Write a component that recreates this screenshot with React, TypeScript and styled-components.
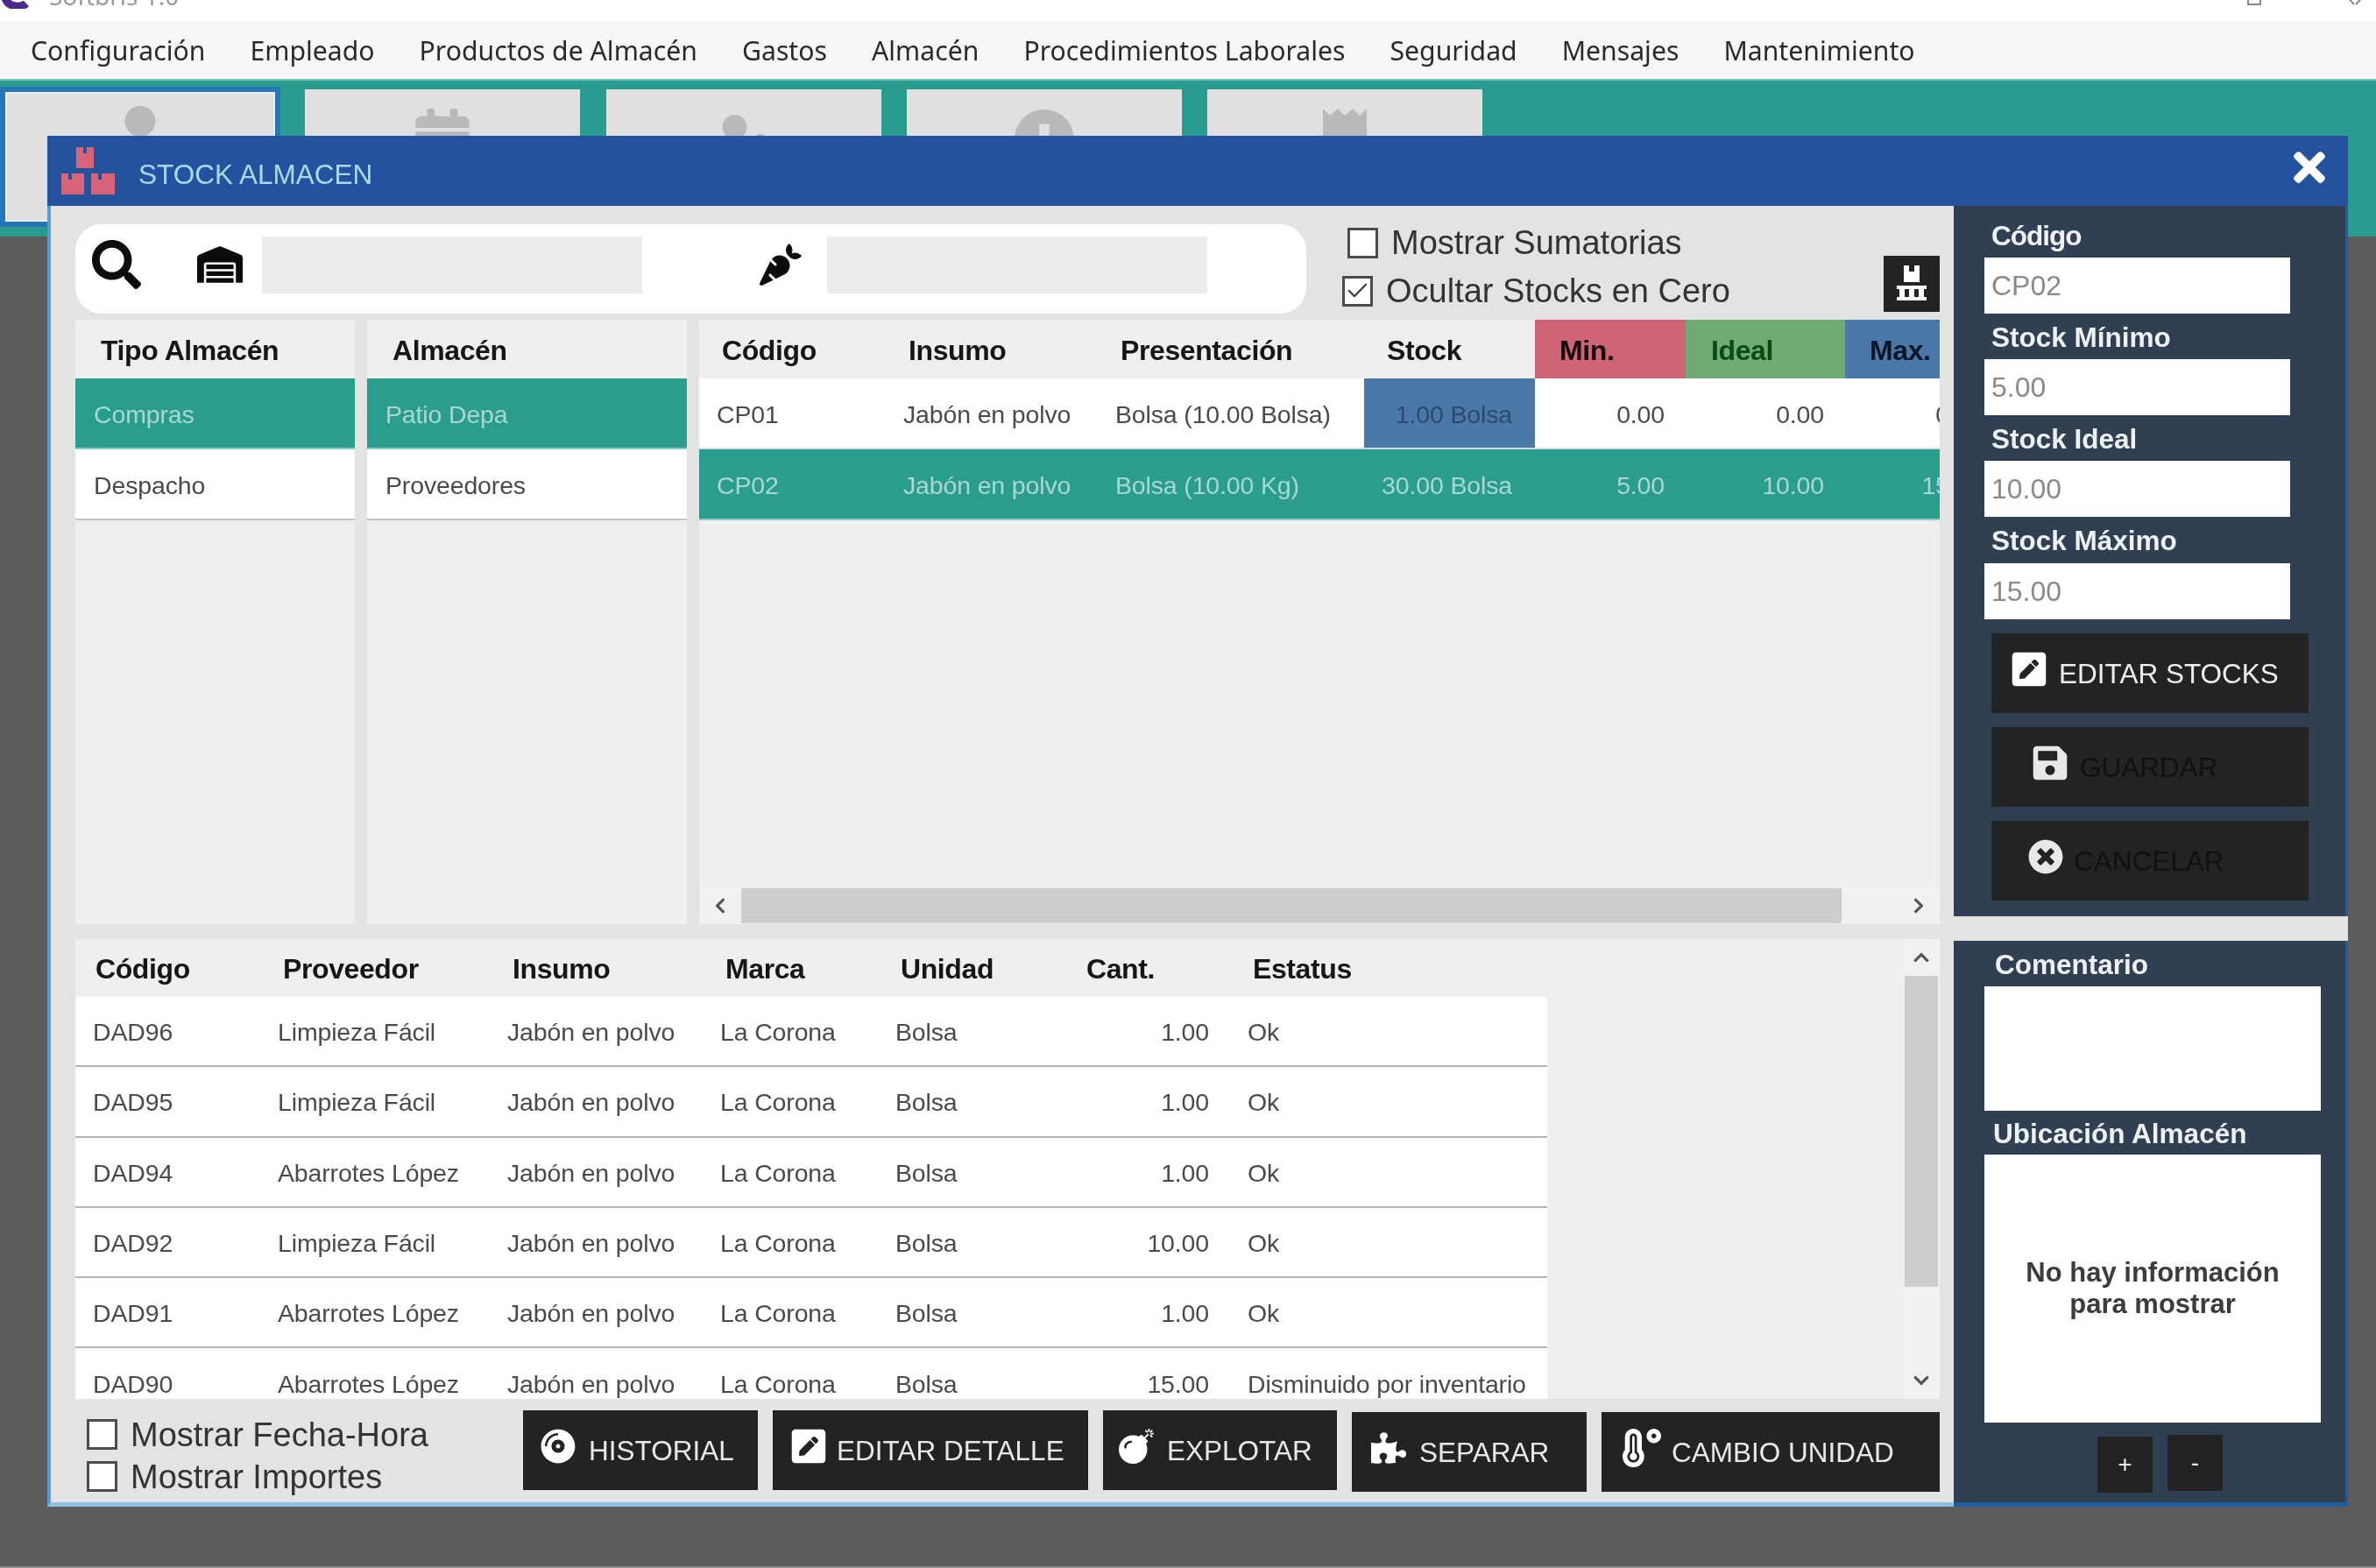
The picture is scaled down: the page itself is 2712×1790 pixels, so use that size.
import React from 'react';
import styled, { createGlobalStyle } from 'styled-components';
import {
    FaBomb,
    FaCalendarAlt,
    FaCarrot,
    FaChevronDown,
    FaChevronLeft,
    FaChevronRight,
    FaChevronUp,
    FaCompactDisc,
    FaExclamationCircle,
    FaPenSquare,
    FaPuzzlePiece,
    FaSave,
    FaSearch,
    FaTemperatureHigh,
    FaTimes,
    FaTimesCircle,
    FaUser,
    FaUserCog,
    FaWarehouse,
} from 'react-icons/fa';
import { Check } from 'lucide-react';

const GlobalStyle = createGlobalStyle`
    html, body {
        margin: 0;
        padding: 0;
        background: #5c5c5c;
    }
    * {
        box-sizing: border-box;
    }
`;

const Page = styled.div`
    position: relative;
    width: 2712px;
    height: 1790px;
    overflow: hidden;
    background: #5c5c5c;
    border-bottom: 2px solid #8a8a8a;
    font-family: 'Liberation Sans', Arial, sans-serif;
    filter: blur(0.6px);
`;

const TitleBar = styled.div`
    height: 24px;
    background: #fff;
    display: flex;
    align-items: flex-end;
    justify-content: space-between;
    overflow: hidden;
`;

const AppName = styled.div`
    display: flex;
    align-items: flex-end;
    gap: 20px;
    padding-bottom: 14px;
    font-family: 'Noto Sans', sans-serif;
    font-size: 28px;
    line-height: 30px;
    color: #9a9a9a;
`;

const WindowIcons = styled.svg`
    width: 160px;
    height: 24px;
`;

const MenuBar = styled.div`
    height: 66px;
    padding-left: 35px;
    background: #f7f7f5;
    display: flex;
    align-items: center;
    gap: 51px;
    font-family: 'Noto Sans', sans-serif;
    font-size: 30.2px;
    color: #2a2a2a;
`;

const TabStrip = styled.div`
    height: 180px;
    padding: 10px 0 0 0;
    background: #2a9c8f;
    border-top: 2px solid #7fc4bb;
    display: flex;
    align-items: flex-start;
`;

const Tab = styled.div<{ $active?: boolean; $gap?: number }>`
    width: ${(p) => (p.$active ? 320 : 314)}px;
    height: ${(p) => (p.$active ? 160 : 153)}px;
    margin-left: ${(p) => p.$gap || 0}px;
    margin-top: ${(p) => (p.$active ? -3 : 0)}px;
    background: #e0e0e0;
    color: #b9b9b9;
    border: ${(p) => (p.$active ? '6px solid #2377b8' : 'none')};
    outline: ${(p) => (p.$active ? '2px solid #f0f0f0' : 'none')};
    outline-offset: -8px;
    display: flex;
    justify-content: center;
    padding-top: ${(p) => (p.$active ? 16 : 22)}px;
    font-size: 70px;
`;

const Modal = styled.div`
    position: absolute;
    left: 54px;
    top: 155px;
    width: 2626px;
    height: 1565px;
    display: flex;
    flex-direction: column;
`;

const ModalHeader = styled.div`
    height: 80px;
    flex: none;
    background: #25529f;
    display: flex;
    align-items: center;
    padding: 0 18px 0 16px;
    color: #a9d9ea;
    font-size: 31.5px;
`;

const ModalTitle = styled.span`
    margin-left: 27px;
    margin-top: 8px;
`;

const CloseIcon = styled(FaTimes)`
    margin-left: auto;
    color: #fff;
    font-size: 52px;
    margin-top: -8px;
`;

const ModalBody = styled.div`
    flex: 1;
    display: flex;
    min-height: 0;
`;

const LeftColumn = styled.div`
    width: 2176px;
    flex: none;
    background: #e3e3e3;
    border-left: 4px solid #5b9ccb;
    border-bottom: 5px solid #8fc0e0;
    padding: 21px 16px 0 28px;
    display: flex;
    flex-direction: column;
`;

const Toolbar = styled.div`
    height: 102px;
    flex: none;
    display: flex;
`;

const SearchPanel = styled.div`
    width: 1405px;
    flex: none;
    padding: 0 0 10px 19px;
    background: #fff;
    border-radius: 30px;
    display: flex;
    align-items: center;
`;

const IconSlot = styled.div<{ $gap?: number; $size: number }>`
    flex: none;
    display: flex;
    margin-left: ${(p) => p.$gap || 0}px;
    font-size: ${(p) => p.$size}px;
    color: #0c0c0c;
`;

const SearchInput = styled.div<{ $gap: number }>`
    width: 434px;
    height: 65px;
    margin-left: ${(p) => p.$gap}px;
    background: #ececec;
    flex: none;
`;

const ToolbarChecks = styled.div`
    margin-left: 41px;
    display: flex;
    flex-direction: column;
    gap: 13px;
`;

const CheckRow = styled.div<{ $indent?: number; $height: number }>`
    height: ${(p) => p.$height}px;
    padding-left: ${(p) => p.$indent || 0}px;
    display: flex;
    align-items: center;
    gap: 15px;
    font-size: 38px;
    color: #333;
`;

const CheckLabel = styled.span`
    transform: translateY(1px);
`;

const CheckBox = styled.div`
    width: 35px;
    height: 35px;
    flex: none;
    background: #fff;
    border: 3px solid #4c4c4c;
    display: flex;
    align-items: center;
    justify-content: center;
    color: #444;
`;

const PalletButton = styled.div`
    width: 64px;
    height: 64px;
    margin: auto 0 2px auto;
    background: #222;
    display: flex;
    align-items: center;
    justify-content: center;
`;

const ListsRow = styled.div`
    height: 690px;
    flex: none;
    margin-top: 7px;
    display: grid;
    grid-template-columns: 319px 365px 1416px;
    gap: 14px;
`;

const ListPanel = styled.div`
    background: #efefef;
    display: flex;
    flex-direction: column;
    overflow: hidden;
    min-width: 0;
`;

const ListHeader = styled.div`
    height: 67px;
    flex: none;
    padding: 3px 0 0 29px;
    display: flex;
    align-items: center;
    font-size: 32px;
    font-weight: bold;
    letter-spacing: -0.4px;
    color: #161616;
`;

const ListItem = styled.div<{ $selected?: boolean }>`
    height: 81px;
    flex: none;
    padding: 3px 0 0 21px;
    display: flex;
    align-items: center;
    font-size: 28.5px;
    letter-spacing: -0.15px;
    background: ${(p) => (p.$selected ? '#2a9d8f' : '#fff')};
    color: ${(p) => (p.$selected ? '#a9d8d2' : '#4a4a4a')};
    border-bottom: 2px solid ${(p) => (p.$selected ? '#8ccac2' : '#c4c4c4')};
`;

const StockGridScroll = styled.div`
    flex: 1;
    min-height: 0;
    overflow: hidden;
`;

const stockColumns = '213px 242px 304px 195px 172px 182px 182px';

const StockHead = styled.div`
    width: 1490px;
    height: 67px;
    display: grid;
    grid-template-columns: ${stockColumns};
`;

const HeadCell = styled.div<{ $bg?: string; $fg?: string; $indent?: number }>`
    padding: 3px 0 0 ${(p) => p.$indent || 26}px;
    display: flex;
    align-items: center;
    font-size: 32px;
    font-weight: bold;
    letter-spacing: -0.4px;
    background: ${(p) => p.$bg || 'transparent'};
    color: ${(p) => p.$fg || '#161616'};
`;

const StockRow = styled.div<{ $selected?: boolean }>`
    width: 1490px;
    height: 81px;
    display: grid;
    grid-template-columns: ${stockColumns};
    background: ${(p) => (p.$selected ? '#2a9d8f' : '#fff')};
    color: ${(p) => (p.$selected ? '#a9d8d2' : '#4a4a4a')};
    border-bottom: 2px solid ${(p) => (p.$selected ? '#8ccac2' : '#d9d9d9')};
`;

const Cell = styled.div<{ $right?: boolean; $bg?: string; $fg?: string; $pad?: number }>`
    display: flex;
    align-items: center;
    justify-content: ${(p) => (p.$right ? 'flex-end' : 'flex-start')};
    padding: ${(p) => (p.$right ? `3px ${p.$pad || 24}px 0 0` : `3px 0 0 ${p.$pad || 20}px`)};
    font-size: 28.5px;
    letter-spacing: -0.15px;
    white-space: nowrap;
    overflow: hidden;
    background: ${(p) => p.$bg || 'transparent'};
    color: ${(p) => p.$fg || 'inherit'};
`;

const HScroll = styled.div`
    height: 43px;
    flex: none;
    display: flex;
    align-items: center;
    background: #f1f1f1;
    color: #555;
    font-size: 20px;
`;

const ScrollArrow = styled.div<{ $size?: number }>`
    flex: none;
    width: ${(p) => p.$size || 48}px;
    height: ${(p) => p.$size || 43}px;
    display: flex;
    align-items: center;
    justify-content: center;
`;

const HThumb = styled.div`
    width: 1256px;
    height: 40px;
    background: #cdcdcd;
`;

const HTrack = styled.div`
    flex: 1;
`;

const DetailPanel = styled.div`
    height: 525px;
    flex: none;
    margin-top: 17px;
    background: #efefef;
    display: flex;
    overflow: hidden;
`;

const DetailTable = styled.div`
    flex: 1;
    min-width: 0;
    overflow: hidden;
`;

const detailColumns = '211px 262px 243px 200px 200px 202px 362px';

const DetailHead = styled.div`
    width: 1680px;
    height: 66px;
    display: grid;
    grid-template-columns: ${detailColumns};
`;

const DetailRow = styled.div`
    width: 1680px;
    height: 80.3px;
    display: grid;
    grid-template-columns: ${detailColumns};
    background: #fff;
    color: #4a4a4a;
    border-bottom: 2px solid #b4b4b4;
`;

const VScroll = styled.div`
    width: 42px;
    flex: none;
    background: #f1f1f1;
    color: #555;
    font-size: 20px;
    display: flex;
    flex-direction: column;
    align-items: center;
`;

const VThumb = styled.div`
    width: 38px;
    height: 355px;
    background: #cdcdcd;
`;

const VTrack = styled.div`
    flex: 1;
`;

const BottomBar = styled.div`
    flex: 1;
    display: flex;
    align-items: flex-start;
`;

const BottomChecks = styled.div`
    width: 511px;
    flex: none;
    padding: 22px 0 0 13px;
    display: flex;
    flex-direction: column;
    gap: 12px;
`;

const ActionRow = styled.div`
    padding-top: 13px;
    display: flex;
    gap: 17px;
`;

const ActionButton = styled.div<{ $width: number; $drop?: boolean; $pad?: number; $gap?: number }>`
    width: ${(p) => p.$width}px;
    height: 91px;
    margin-top: ${(p) => (p.$drop ? 2 : 0)}px;
    padding-left: ${(p) => p.$pad || 20}px;
    background: #232224;
    display: flex;
    align-items: center;
    gap: ${(p) => p.$gap || 15}px;
    font-size: 31.5px;
    color: #e8e8e8;
    white-space: nowrap;
`;

const ButtonIcon = styled.span<{ $size?: number; $fg?: string }>`
    display: flex;
    font-size: ${(p) => p.$size || 40}px;
    color: ${(p) => p.$fg || '#fff'};
    transform: translateY(-5px);
`;

const ButtonText = styled.span<{ $fg?: string }>`
    color: ${(p) => p.$fg || 'inherit'};
    transform: translateY(1px);
`;

const RightColumn = styled.div`
    flex: 1;
    background: #e3e3e3;
    display: flex;
    flex-direction: column;
    gap: 28px;
`;

const SidePanel = styled.div<{ $grow?: boolean }>`
    background: #303f52;
    border-right: 3px solid #1d5da0;
    color: #eef2f4;
    display: flex;
    flex-direction: column;
    ${(p) => (p.$grow ? 'flex: 1; border-bottom: 5px solid #1d5da0;' : 'height: 811px; flex: none;')}
`;

const StockForm = styled.div`
    padding: 7px 0 0 35px;
    display: flex;
    flex-direction: column;
`;

const FieldLabel = styled.div<{ $height?: number; $indent?: number; $spacing?: number }>`
    height: ${(p) => p.$height || 52}px;
    padding: 2px 0 0 ${(p) => p.$indent || 8}px;
    display: flex;
    align-items: center;
    font-size: 31.5px;
    font-weight: bold;
    letter-spacing: ${(p) => p.$spacing || 0}px;
`;

const FieldInput = styled.div`
    width: 349px;
    height: 64px;
    padding-left: 8px;
    background: #fff;
    display: flex;
    align-items: center;
    font-size: 32px;
    color: #8a8a8a;
`;

const SideButtons = styled.div`
    margin: 16px 0 0 43px;
    display: flex;
    flex-direction: column;
    gap: 16px;
`;

const SideButton = styled.div<{ $pad: number }>`
    width: 362px;
    height: 91px;
    padding-left: ${(p) => p.$pad}px;
    background: #232224;
    display: flex;
    align-items: center;
    gap: 12px;
    font-size: 31.5px;
    color: #eee;
`;

const NotesForm = styled.div`
    padding: 0 0 0 35px;
    display: flex;
    flex-direction: column;
    flex: 1;
`;

const WhiteBox = styled.div<{ $height: number }>`
    width: 384px;
    height: ${(p) => p.$height}px;
    flex: none;
    background: #fff;
    display: flex;
    align-items: center;
    justify-content: center;
    text-align: center;
    font-size: 31px;
    line-height: 36px;
    font-weight: bold;
    color: #3c3c3c;
`;

const StepButtons = styled.div`
    margin: 14px 0 0 129px;
    display: flex;
    gap: 17px;
`;

const StepButton = styled.div<{ $drop?: boolean }>`
    width: 63px;
    height: 64px;
    margin-top: ${(p) => (p.$drop ? 2 : 0)}px;
    background: #232224;
    color: #eee;
    font-size: 28px;
    display: flex;
    align-items: center;
    justify-content: center;
`;

const BoxesLogo = () => (
    <svg width="61" height="54" viewBox="0 0 61 54">
        <path d="M17 0h8v7h4V0h8v24H17z" fill="#d9637a" />
        <path d="M0 30h8v7h4v-7h14v24H0z" fill="#d9637a" />
        <path d="M34 30h8v7h4v-7h15v24H34z" fill="#d9637a" />
    </svg>
);

const PalletIcon = () => (
    <svg width="38" height="42" viewBox="0 0 38 42">
        <path d="M10 0h6v7h6V0h6v19H10z" fill="#fff" />
        <path d="M2 23h34v4H2zM2 36h34v4H2z" fill="#fff" />
        <path d="M5 27h6v9H5zM16 27h6v9h-6zM27 27h6v9h-6z" fill="#fff" />
    </svg>
);

const FortIcon = () => (
    <svg width="50" height="70" viewBox="0 0 50 70">
        <path d="M0 0l8 8 9-8 8 8 9-8 8 8 8-8v70H0z" fill="#b9b9b9" />
    </svg>
);

const stockRows = [
    { code: 'CP01', item: 'Jabón en polvo', pres: 'Bolsa (10.00 Bolsa)', stock: '1.00 Bolsa', min: '0.00', ideal: '0.00', max: '0.00' },
    { code: 'CP02', item: 'Jabón en polvo', pres: 'Bolsa (10.00 Kg)', stock: '30.00 Bolsa', min: '5.00', ideal: '10.00', max: '15.00' },
];

const detailRows = [
    ['DAD96', 'Limpieza Fácil', '1.00', 'Ok'],
    ['DAD95', 'Limpieza Fácil', '1.00', 'Ok'],
    ['DAD94', 'Abarrotes López', '1.00', 'Ok'],
    ['DAD92', 'Limpieza Fácil', '10.00', 'Ok'],
    ['DAD91', 'Abarrotes López', '1.00', 'Ok'],
    ['DAD90', 'Abarrotes López', '15.00', 'Disminuido por inventario'],
];

const menuItems = [
    'Configuración',
    'Empleado',
    'Productos de Almacén',
    'Gastos',
    'Almacén',
    'Procedimientos Laborales',
    'Seguridad',
    'Mensajes',
    'Mantenimiento',
];

const App: React.FC = () => {
    return (
        <Page>
            <GlobalStyle />
            <TitleBar>
                <AppName>
                    <svg width="36" height="30" viewBox="0 0 36 30">
                        <path d="M30 24c-4 4-20 6-24-6" fill="none" stroke="#4b2a8c" strokeWidth="9" />
                    </svg>
                    <span>Softbris 1.0</span>
                </AppName>
                <WindowIcons viewBox="0 0 160 24">
                    <path d="M14 -4v9h14v-9" fill="none" stroke="#888" strokeWidth="2" />
                    <path d="M125 -6l10 11M147 -6l-10 11" fill="none" stroke="#888" strokeWidth="2" />
                </WindowIcons>
            </TitleBar>
            <MenuBar>
                {menuItems.map((item) => (
                    <span key={item}>{item}</span>
                ))}
            </MenuBar>
            <TabStrip>
                <Tab $active>
                    <FaUser />
                </Tab>
                <Tab $gap={28}>
                    <FaCalendarAlt />
                </Tab>
                <Tab $gap={30}>
                    <FaUserCog />
                </Tab>
                <Tab $gap={29}>
                    <FaExclamationCircle />
                </Tab>
                <Tab $gap={29}>
                    <FortIcon />
                </Tab>
            </TabStrip>
            <Modal>
                <ModalHeader>
                    <BoxesLogo />
                    <ModalTitle>STOCK ALMACEN</ModalTitle>
                    <CloseIcon />
                </ModalHeader>
                <ModalBody>
                    <LeftColumn>
                        <Toolbar>
                            <SearchPanel>
                                <IconSlot $size={56}>
                                    <FaSearch />
                                </IconSlot>
                                <IconSlot $gap={64} $size={52}>
                                    <FaWarehouse />
                                </IconSlot>
                                <SearchInput $gap={22} />
                                <IconSlot $gap={134} $size={48}>
                                    <FaCarrot />
                                </IconSlot>
                                <SearchInput $gap={29} />
                            </SearchPanel>
                            <ToolbarChecks>
                                <CheckRow $indent={6} $height={42}>
                                    <CheckBox />
                                    <span>Mostrar Sumatorias</span>
                                </CheckRow>
                                <CheckRow $height={42}>
                                    <CheckBox>
                                        <Check size={30} strokeWidth={2} />
                                    </CheckBox>
                                    <span>Ocultar Stocks en Cero</span>
                                </CheckRow>
                            </ToolbarChecks>
                            <PalletButton>
                                <PalletIcon />
                            </PalletButton>
                        </Toolbar>
                        <ListsRow>
                            <ListPanel>
                                <ListHeader>Tipo Almacén</ListHeader>
                                <ListItem $selected>Compras</ListItem>
                                <ListItem>Despacho</ListItem>
                            </ListPanel>
                            <ListPanel>
                                <ListHeader>Almacén</ListHeader>
                                <ListItem $selected>Patio Depa</ListItem>
                                <ListItem>Proveedores</ListItem>
                            </ListPanel>
                            <ListPanel>
                                <StockGridScroll>
                                    <StockHead>
                                        <HeadCell>Código</HeadCell>
                                        <HeadCell>Insumo</HeadCell>
                                        <HeadCell>Presentación</HeadCell>
                                        <HeadCell>Stock</HeadCell>
                                        <HeadCell $bg="#cf6377" $fg="#14080a" $indent={28}>
                                            Min.
                                        </HeadCell>
                                        <HeadCell $bg="#6fab72" $fg="#0b4a17" $indent={29}>
                                            Ideal
                                        </HeadCell>
                                        <HeadCell $bg="#4a78a8" $fg="#0a1626" $indent={28}>
                                            Max.
                                        </HeadCell>
                                    </StockHead>
                                    {stockRows.map((row, index) => (
                                        <StockRow key={row.code} $selected={index === 1}>
                                            <Cell>{row.code}</Cell>
                                            <Cell>{row.item}</Cell>
                                            <Cell>{row.pres}</Cell>
                                            {index === 0 ? (
                                                <Cell $right $pad={26} $bg="#4a78a8" $fg="#2b4a6e">
                                                    {row.stock}
                                                </Cell>
                                            ) : (
                                                <Cell $right $pad={26}>
                                                    {row.stock}
                                                </Cell>
                                            )}
                                            <Cell $right>{row.min}</Cell>
                                            <Cell $right>{row.ideal}</Cell>
                                            <Cell $right>{row.max}</Cell>
                                        </StockRow>
                                    ))}
                                </StockGridScroll>
                                <HScroll>
                                    <ScrollArrow>
                                        <FaChevronLeft />
                                    </ScrollArrow>
                                    <HThumb />
                                    <HTrack />
                                    <ScrollArrow>
                                        <FaChevronRight />
                                    </ScrollArrow>
                                </HScroll>
                            </ListPanel>
                        </ListsRow>
                        <DetailPanel>
                            <DetailTable>
                                <DetailHead>
                                    <HeadCell $indent={23}>Código</HeadCell>
                                    <HeadCell>Proveedor</HeadCell>
                                    <HeadCell>Insumo</HeadCell>
                                    <HeadCell>Marca</HeadCell>
                                    <HeadCell>Unidad</HeadCell>
                                    <HeadCell $indent={38}>Cant.</HeadCell>
                                    <HeadCell>Estatus</HeadCell>
                                </DetailHead>
                                {detailRows.map(([code, vendor, qty, status]) => (
                                    <DetailRow key={code}>
                                        <Cell>{code}</Cell>
                                        <Cell>{vendor}</Cell>
                                        <Cell>Jabón en polvo</Cell>
                                        <Cell>La Corona</Cell>
                                        <Cell>Bolsa</Cell>
                                        <Cell $right>{qty}</Cell>
                                        <Cell>{status}</Cell>
                                    </DetailRow>
                                ))}
                            </DetailTable>
                            <VScroll>
                                <ScrollArrow $size={42}>
                                    <FaChevronUp />
                                </ScrollArrow>
                                <VThumb />
                                <VTrack />
                                <ScrollArrow $size={42}>
                                    <FaChevronDown />
                                </ScrollArrow>
                            </VScroll>
                        </DetailPanel>
                        <BottomBar>
                            <BottomChecks>
                                <CheckRow $height={36}>
                                    <CheckBox />
                                    <CheckLabel>Mostrar Fecha-Hora</CheckLabel>
                                </CheckRow>
                                <CheckRow $height={36}>
                                    <CheckBox />
                                    <CheckLabel>Mostrar Importes</CheckLabel>
                                </CheckRow>
                            </BottomChecks>
                            <ActionRow>
                                <ActionButton $width={268}>
                                    <ButtonIcon>
                                        <FaCompactDisc />
                                    </ButtonIcon>
                                    <ButtonText>HISTORIAL</ButtonText>
                                </ActionButton>
                                <ActionButton $width={360} $pad={19} $gap={10}>
                                    <ButtonIcon $size={44}>
                                        <FaPenSquare />
                                    </ButtonIcon>
                                    <ButtonText>EDITAR DETALLE</ButtonText>
                                </ActionButton>
                                <ActionButton $width={267} $pad={18}>
                                    <ButtonIcon>
                                        <FaBomb />
                                    </ButtonIcon>
                                    <ButtonText>EXPLOTAR</ButtonText>
                                </ActionButton>
                                <ActionButton $width={268} $drop $pad={22}>
                                    <ButtonIcon>
                                        <FaPuzzlePiece />
                                    </ButtonIcon>
                                    <ButtonText>SEPARAR</ButtonText>
                                </ActionButton>
                                <ActionButton $width={386} $drop $pad={24} $gap={12}>
                                    <ButtonIcon $size={44}>
                                        <FaTemperatureHigh />
                                    </ButtonIcon>
                                    <ButtonText>CAMBIO UNIDAD</ButtonText>
                                </ActionButton>
                            </ActionRow>
                        </BottomBar>
                    </LeftColumn>
                    <RightColumn>
                        <SidePanel>
                            <StockForm>
                                <FieldLabel $spacing={-1}>Código</FieldLabel>
                                <FieldInput>CP02</FieldInput>
                                <FieldLabel>Stock Mínimo</FieldLabel>
                                <FieldInput>5.00</FieldInput>
                                <FieldLabel>Stock Ideal</FieldLabel>
                                <FieldInput>10.00</FieldInput>
                                <FieldLabel $height={53}>Stock Máximo</FieldLabel>
                                <FieldInput>15.00</FieldInput>
                            </StockForm>
                            <SideButtons>
                                <SideButton $pad={21}>
                                    <ButtonIcon $size={44}>
                                        <FaPenSquare />
                                    </ButtonIcon>
                                    <ButtonText>EDITAR STOCKS</ButtonText>
                                </SideButton>
                                <SideButton $pad={45}>
                                    <ButtonIcon $size={44} $fg="#e8e8e8">
                                        <FaSave />
                                    </ButtonIcon>
                                    <ButtonText $fg="#111">GUARDAR</ButtonText>
                                </SideButton>
                                <SideButton $pad={42}>
                                    <ButtonIcon $fg="#e8e8e8">
                                        <FaTimesCircle />
                                    </ButtonIcon>
                                    <ButtonText $fg="#111">CANCELAR</ButtonText>
                                </SideButton>
                            </SideButtons>
                        </SidePanel>
                        <SidePanel $grow>
                            <NotesForm>
                                <FieldLabel $indent={12}>Comentario</FieldLabel>
                                <WhiteBox $height={142} />
                                <FieldLabel $height={50} $indent={10}>
                                    Ubicación Almacén
                                </FieldLabel>
                                <WhiteBox $height={306}>
                                    No hay información
                                    <br />
                                    para mostrar
                                </WhiteBox>
                                <StepButtons>
                                    <StepButton $drop>+</StepButton>
                                    <StepButton>-</StepButton>
                                </StepButtons>
                            </NotesForm>
                        </SidePanel>
                    </RightColumn>
                </ModalBody>
            </Modal>
        </Page>
    );
};

export default App;
